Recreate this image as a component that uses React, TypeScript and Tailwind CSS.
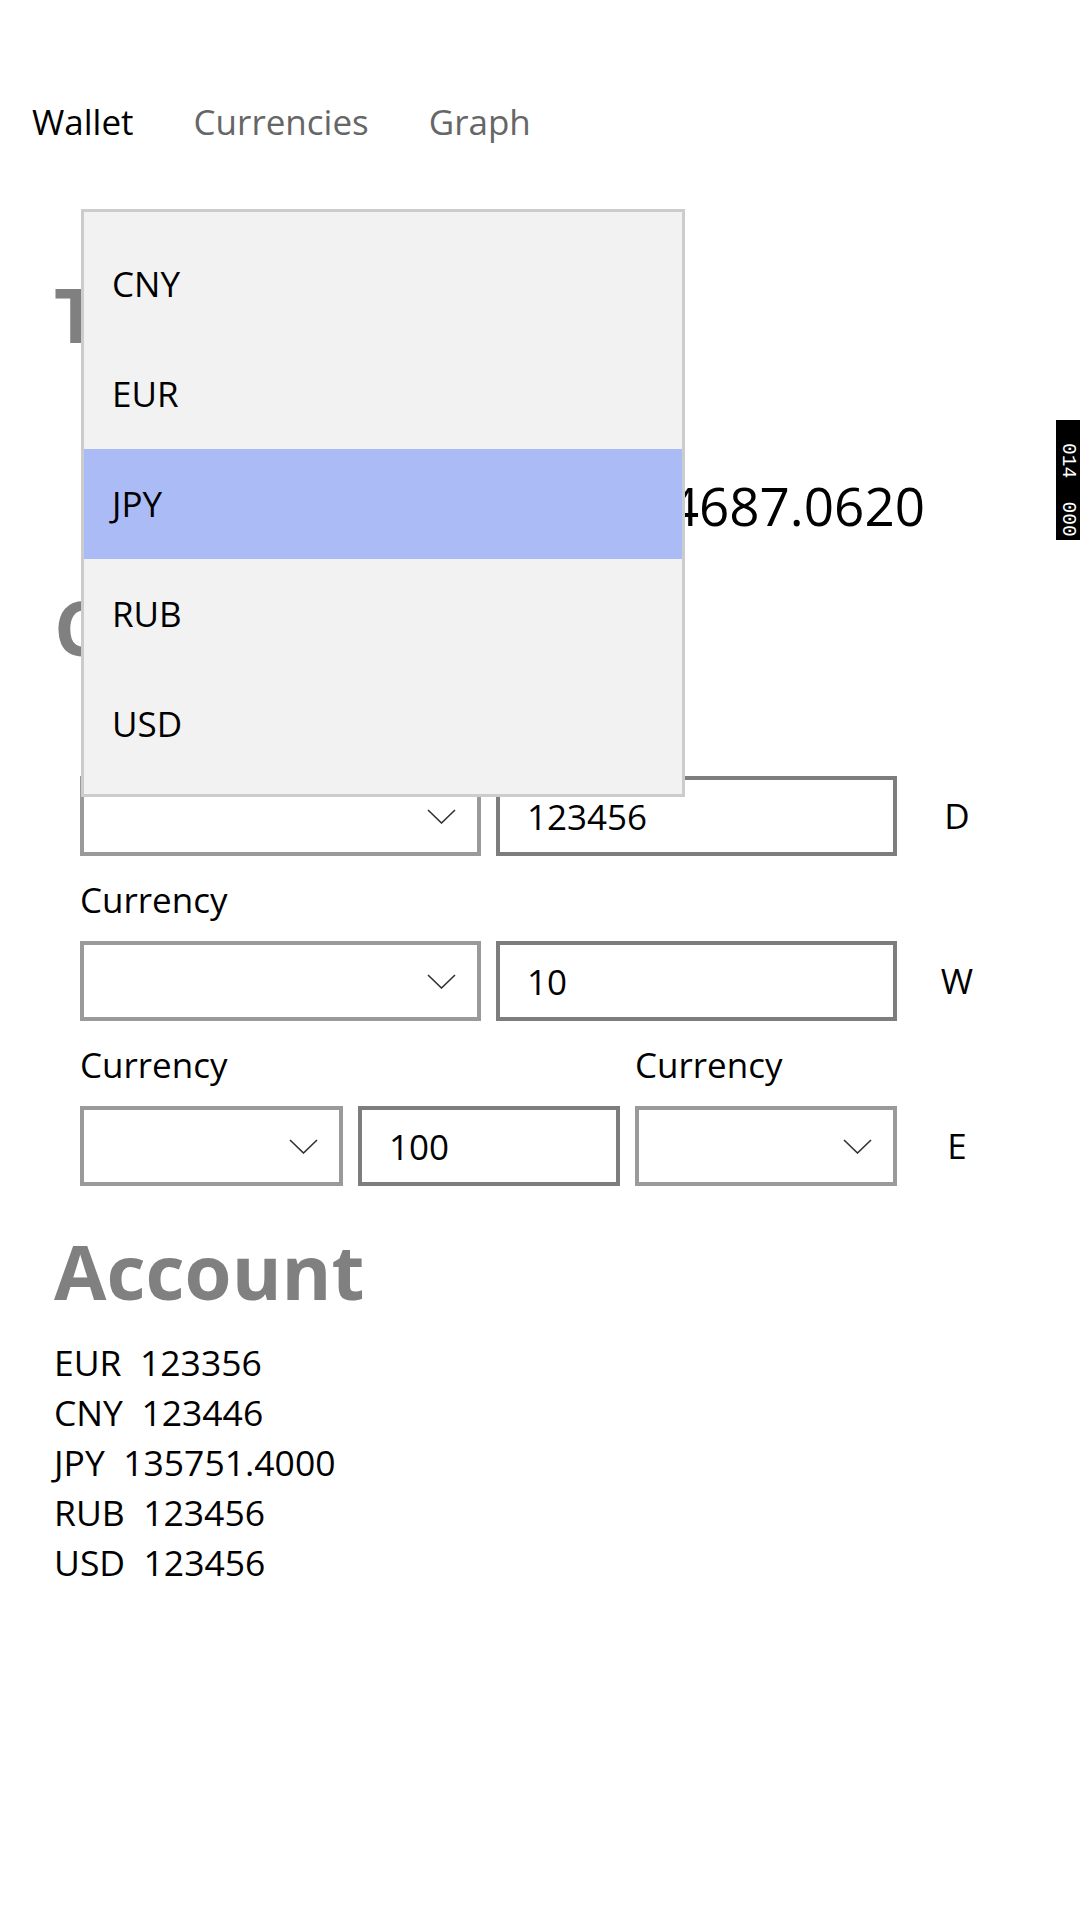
import React from 'react'

const popupItems = ['CNY', 'EUR', 'JPY', 'RUB', 'USD']

const accountRows = [
  ['EUR', '123356'],
  ['CNY', '123446'],
  ['JPY', '135751.4000'],
  ['RUB', '123456'],
  ['USD', '123456'],
]

function Chevron() {
  return (
    <svg width="29" height="15" viewBox="0 0 29 15" fill="none">
      <polyline points="1,1 14.5,14 28,1" stroke="#333333" strokeWidth="1.6" />
    </svg>
  )
}

function Combo({ width }: { width: string }) {
  return (
    <div className={`${width} h-[80px] border-4 border-[#9a9a9a] bg-white flex items-center justify-end pr-[21px] shrink-0`}>
      <Chevron />
    </div>
  )
}

function TextBox({ width, value }: { width: string; value: string }) {
  return (
    <div className={`${width} h-[80px] border-4 border-[#7d7d7d] bg-white flex items-center pl-[27px] shrink-0`}>
      <span className="leading-none">{value}</span>
    </div>
  )
}

function Label({ children }: { children: React.ReactNode }) {
  return <div className="h-[48px] leading-[48px]">{children}</div>
}

function SideLetter({ children }: { children: React.ReactNode }) {
  return <div className="w-[80px] ml-[5px] text-center">{children}</div>
}

export default function App() {
  return (
    <div
      className="relative min-h-[1920px] w-[1080px] bg-white text-black text-[35px] overflow-hidden"
      style={{ fontFamily: '"Open Sans", "Noto Sans", sans-serif' }}
    >
      {/* pivot header */}
      <nav className="mt-[98px] pl-[32px] h-[48px] leading-[48px] flex gap-[60px]">
        <span className="text-black">Wallet</span>
        <span className="text-[#666666]">Currencies</span>
        <span className="text-[#666666]">Graph</span>
      </nav>

      <div className="pl-[54px]">
        <h1 className="mt-[128px] h-[80px] leading-[80px] text-[76px] font-bold text-[#808080]">Total</h1>
        <div className="mt-[116px] h-[72px] leading-[72px] text-[53px] w-[871px] text-right">1234687.0620</div>
        <h1 className="mt-[45px] h-[80px] leading-[80px] text-[76px] font-bold text-[#808080]">Convert</h1>

        <div className="pl-[26px] mt-[44px]">
          {/* deposit */}
          <Label>Currency</Label>
          <div className="mt-[17px] flex items-center gap-[15px]">
            <Combo width="w-[401px]" />
            <TextBox width="w-[401px]" value="123456" />
            <SideLetter>D</SideLetter>
          </div>

          {/* withdraw */}
          <div className="mt-[20px]">
            <Label>Currency</Label>
          </div>
          <div className="mt-[17px] flex items-center gap-[15px]">
            <Combo width="w-[401px]" />
            <TextBox width="w-[401px]" value="10" />
            <SideLetter>W</SideLetter>
          </div>

          {/* exchange */}
          <div className="mt-[20px] grid grid-cols-[263px_262px_262px] gap-x-[15px]">
            <Label>Currency</Label>
            <div />
            <Label>Currency</Label>
          </div>
          <div className="mt-[17px] flex items-center gap-[15px]">
            <Combo width="w-[263px]" />
            <TextBox width="w-[262px]" value="100" />
            <Combo width="w-[262px]" />
            <SideLetter>E</SideLetter>
          </div>
        </div>

        <h1 className="mt-[45px] h-[80px] leading-[80px] text-[76px] font-bold text-[#808080]">Account</h1>
        <div className="mt-[26px] text-[35.5px]">
          {accountRows.map(([code, amount]) => (
            <div key={code} className="h-[50px] leading-[50px] whitespace-pre">
              {code}  {amount}
            </div>
          ))}
        </div>
      </div>

      {/* open combo box list */}
      <div className="absolute left-[81px] top-[209px] w-[604px] h-[588px] bg-[#f2f2f2] border-[3px] border-[#cccccc] pt-[17px]">
        {popupItems.map((item) => (
          <div
            key={item}
            className={`h-[110px] flex items-center pl-[28px] ${item === 'JPY' ? 'bg-[#aabbf6]' : ''}`}
          >
            {item}
          </div>
        ))}
      </div>

      {/* frame counter */}
      <div className="absolute right-0 top-[420px] w-[24px] h-[120px] bg-black flex flex-col items-center justify-end pb-[3px]">
        <span
          className="text-white text-[19.5px] leading-[24px] whitespace-pre [writing-mode:vertical-rl]"
          style={{ fontFamily: '"Liberation Mono", monospace' }}
        >
          014  000
        </span>
      </div>
    </div>
  )
}
